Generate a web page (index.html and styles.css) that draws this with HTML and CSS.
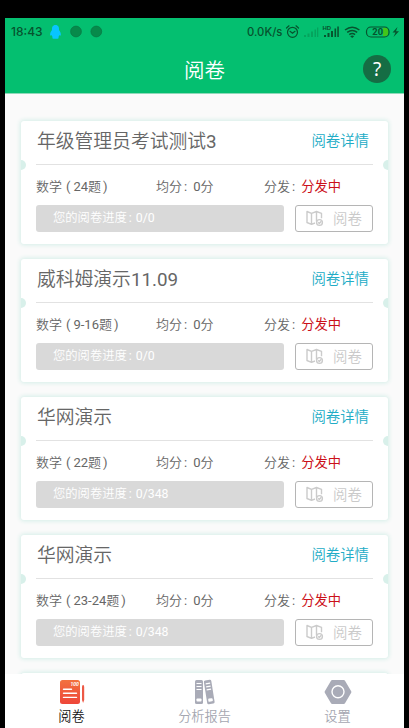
FILE: index.html
```html
<!DOCTYPE html>
<html lang="zh-CN">
<head>
<meta charset="utf-8">
<title>阅卷</title>
<link rel="stylesheet" href="styles.css">
</head>
<body>
<svg width="0" height="0" class="defs">
  <symbol id="map" viewBox="0 0 18 17">
    <g fill="none" stroke="#cbcbcb" stroke-width="1.4" stroke-linejoin="round">
      <path d="M1 1.500 5.500 3.300v11L1 12.500zM5.500 3.300 10.500 1.500v10M5.500 14.300l3.500-1.300M10.500 1.500 15.500 3.300v5"/>
      <circle cx="13.500" cy="12.500" r="2.900"/><path d="m12.200 12.300 1.100 1.100 2-2.100"/>
    </g>
  </symbol>
</svg>
<div class="phone">
  <header class="header">
    <div class="status">
      <span class="time">18:43</span>
      <svg class="notices" width="54" height="16" viewBox="0 0 54 16">
        <path d="M6.500 1C3.600 1 2.700 3.500 3 6 1.800 7.500.8 9.500 1.200 11.500c.8.3 1.300-.5 1.300-.5.3 1 .8 1.600 1.200 2-1.400 1.400.5 2 2.800 1.700 2.300.3 4.200-.3 2.800-1.700.4-.4.9-1 1.200-2 0 0 .5.8 1.300.5.4-2-.6-4-1.800-5.500.3-2.500-.6-5-3.500-5z" fill="#08c5ff"/>
        <g fill="#078a4b" stroke="#087643" stroke-width=".7"><circle cx="27" cy="7.500" r="5.400"/><circle cx="47.300" cy="7.500" r="5.400"/></g>
      </svg>
      <span class="speed">0.0K/s</span>
      <svg class="signals" width="116" height="18" viewBox="0 0 116 18">
        <g fill="none" stroke="#07532e" stroke-width="1.200" stroke-linecap="round">
          <circle cx="8.500" cy="9.300" r="5"/><path d="m6 8.300 2.500 2L11 8.300M2.500 5 5 2.800M14.500 5 12 2.800"/>
        </g>
        <g fill="#05a35d"><path d="M20 12h2v2h-2zM23.500 10.500h2V14h-2zM27 8.500h2V14h-2zM30.500 6.500h1.500V14h-1.500zM33 4.500h1.300V14H33z"/></g>
        <g fill="#07532e"><path d="M40 12h2v2h-2zM43.500 10h2v4h-2zM47 8h2v6h-2zM50.500 5.500h1.600V14h-1.600zM53.300 3.500h1.500V14h-1.500z"/></g>
        <text x="38.500" y="7" class="hd">HD</text>
        <g fill="none" stroke="#07532e" stroke-width="1.500"><path d="M61 7q7.200-5.500 14.400 0M63.200 9.300q5-3.800 10 0M65.300 11.600q2.900-2.200 5.800 0"/></g>
        <path d="m66.200 13.200 2 1.800 2-1.800q-2-1.400-4 0z" fill="#07532e"/>
        <path d="M99 4.800h2q3.500 0 3.500 4.200t-3.500 4.200h-2z" fill="#42c51b"/>
        <rect x="82.500" y="4" width="22.500" height="10" rx="4.500" fill="none" stroke="#07532e" stroke-width="1.200"/>
        <text x="88.300" y="12.400" class="battery">20</text>
        <path d="m113.500 4-5 5.500h3L109.500 14l5.500-5.700h-3z" fill="#07532e"/>
      </svg>
    </div>
    <div class="bar"><h1>阅卷</h1><span class="help">?</span></div>
  </header>

  <main class="list">
    <section class="card">
      <div class="head"><h2>年级管理员考试测试<span class="num">3</span></h2><a>阅卷详情</a></div>
      <div class="info"><span>数学<i class="open">(</i><span class="num">24</span>题<i class="close">)</i></span><span>均分<i class="colon">:</i><span class="num">0</span>分</span><span>分发<i class="colon">:</i><b>分发中</b></span></div>
      <div class="actions"><div class="progress">您的阅卷进度<i class="colon">:</i><span class="num">0/0</span></div><div class="button"><svg width="18" height="17"><use href="#map"/></svg><span>阅卷</span></div></div>
    </section>
    <section class="card">
      <div class="head"><h2>威科姆演示<span class="num">11.09</span></h2><a>阅卷详情</a></div>
      <div class="info"><span>数学<i class="open">(</i><span class="num">9-16</span>题<i class="close">)</i></span><span>均分<i class="colon">:</i><span class="num">0</span>分</span><span>分发<i class="colon">:</i><b>分发中</b></span></div>
      <div class="actions"><div class="progress">您的阅卷进度<i class="colon">:</i><span class="num">0/0</span></div><div class="button"><svg width="18" height="17"><use href="#map"/></svg><span>阅卷</span></div></div>
    </section>
    <section class="card">
      <div class="head"><h2>华网演示</h2><a>阅卷详情</a></div>
      <div class="info"><span>数学<i class="open">(</i><span class="num">22</span>题<i class="close">)</i></span><span>均分<i class="colon">:</i><span class="num">0</span>分</span><span>分发<i class="colon">:</i><b>分发中</b></span></div>
      <div class="actions"><div class="progress">您的阅卷进度<i class="colon">:</i><span class="num">0/348</span></div><div class="button"><svg width="18" height="17"><use href="#map"/></svg><span>阅卷</span></div></div>
    </section>
    <section class="card">
      <div class="head"><h2>华网演示</h2><a>阅卷详情</a></div>
      <div class="info"><span>数学<i class="open">(</i><span class="num">23-24</span>题<i class="close">)</i></span><span>均分<i class="colon">:</i><span class="num">0</span>分</span><span>分发<i class="colon">:</i><b>分发中</b></span></div>
      <div class="actions"><div class="progress">您的阅卷进度<i class="colon">:</i><span class="num">0/348</span></div><div class="button"><svg width="18" height="17"><use href="#map"/></svg><span>阅卷</span></div></div>
    </section>
    <section class="card"></section>
  </main>

  <nav class="tabs">
    <div class="tab active">
      <svg width="28" height="26" viewBox="0 0 28 26">
        <defs><linearGradient id="warm" x2="0" y2="1"><stop stop-color="#f2713f"/><stop offset="1" stop-color="#ee4639"/></linearGradient></defs>
        <rect x="2" y="1" width="20" height="24" rx="2.500" fill="url(#warm)"/>
        <path d="M24 8q0-2 1.100-2t1.100 2v13l-1.100 3L24 21z" fill="#ed5945"/>
        <path d="M5.500 10.200h8M5.500 14.300h13M5.500 18.400h13" stroke="#fff" stroke-width="1.400" stroke-linecap="round"/>
        <text x="12.500" y="7" class="score">100</text>
      </svg>
      <span>阅卷</span>
    </div>
    <div class="tab">
      <svg width="28" height="26" viewBox="0 0 28 26">
        <rect x="4" y="1" width="8" height="24" rx="1.500" fill="#a9abb7"/>
        <path d="M5.500 4.500h5M5.500 7.500h5M5.500 10.500h5" stroke="#fff" stroke-width="1.200"/><rect x="5.500" y="19.500" width="5" height="3" rx=".8" fill="#fff"/>
        <g transform="rotate(-9 18 13)"><rect x="14.500" y="1" width="7.500" height="24" rx="1.500" fill="#a9abb7"/><path d="M16 4.500h4.500M16 7.500h4.500M16 10.500h4.500" stroke="#fff" stroke-width="1.200"/><rect x="16" y="19.500" width="4.500" height="3.200" rx="1" fill="#fff"/></g>
      </svg>
      <span>分析报告</span>
    </div>
    <div class="tab">
      <svg width="28" height="26" viewBox="0 0 28 26">
        <path d="M8.200 1h11.600q.8 0 1.200.7l6.200 10.600q.4.700 0 1.400L21 24.300q-.4.700-1.200.7H8.200q-.8 0-1.200-.7L.8 13.700q-.4-.7 0-1.400L7 1.700Q7.400 1 8.200 1z" fill="#a9abb7"/>
        <circle cx="14" cy="12.700" r="6" fill="none" stroke="#fff" stroke-width="1.400"/>
      </svg>
      <span>设置</span>
    </div>
  </nav>
</div>
</body>
</html>
```
FILE: styles.css
```css
* { box-sizing: border-box; }
body {
  margin: 0;
  background: #000;
  font-family: Roboto, "Noto Sans CJK SC", sans-serif;
  font-weight: 350;
  overflow: hidden;
}
.defs { position: absolute; }
i { font-style: normal; font-weight: 400; }
.num { font-weight: 400; }
h1, h2 { margin: 0; font-weight: 350; }
.phone {
  width: 399px;
  height: 710px;
  margin: 18px 0 0 5px;
  background: #fafafa;
  display: flex;
  flex-direction: column;
  overflow: hidden;
}
.header {
  height: 76px;
  flex: none;
  background: #04bf70;
  border-bottom: 1px solid #8fd9b9;
}
.status {
  height: 27px;
  display: flex;
  align-items: center;
  padding-left: 6px;
  color: #07532e;
}
.time { width: 38px; font-family: Inter, sans-serif; font-size: 12px; font-weight: 500; }
.speed { margin-left: 144px; width: 37px; font-family: Inter, sans-serif; font-size: 11.300px; font-weight: 500; white-space: nowrap; }
.hd { font: 700 6px "Liberation Sans", sans-serif; fill: #07532e; }
.battery { font: 700 9.500px Roboto, sans-serif; fill: #07532e; }
.bar {
  height: 48px;
  display: grid;
  grid-template-columns: 1fr auto 1fr;
  align-items: center;
}
.bar h1 { grid-column: 2; padding-top: 3px; font-size: 20.500px; line-height: 30px; color: #fff; }
.help {
  justify-self: end;
  margin-right: 13px;
  width: 28px;
  height: 28px;
  border-radius: 50%;
  background: #156d44;
  color: #fff;
  font-family: "Noto Sans", sans-serif;
  font-size: 19px;
  font-weight: 400;
  line-height: 29px;
  text-align: center;
}
.list { flex: 1; min-height: 0; overflow: hidden; padding: 27px 16px 0; }
.card {
  position: relative;
  height: 123px;
  margin-bottom: 15px;
  padding: 0 15px;
  background: #fff;
  border-radius: 3px;
  box-shadow: 0 0 4px 1px #d4eee8;
}
.card::before, .card::after {
  content: "";
  position: absolute;
  top: 39px;
  width: 5px;
  height: 10px;
  background: #d8f0ea;
}
.card::before { left: 0; border-radius: 0 5px 5px 0; }
.card::after { right: 0; border-radius: 5px 0 0 5px; }
.head {
  height: 44px;
  border-bottom: 1px solid #e2e2e2;
  display: flex;
  justify-content: space-between;
  align-items: center;
  padding: 0 4px 5px 1px;
}
.head h2 { padding-top: 3px; font-size: 18.800px; line-height: 28px; color: #666; }
.head a { padding-bottom: 2px; font-size: 14.400px; color: #22acc6; }
.info {
  height: 40px;
  display: grid;
  grid-template-columns: 120px 108px 1fr;
  align-items: center;
  font-size: 13px;
  color: #666;
}
.info b { font-weight: 400; color: #cb1019; font-size: 13.300px; }
.open { margin: 0 3px 0 4px; }
.close { margin-left: 2px; }
.colon { margin: 0 6px 0 2px; }
.actions { display: flex; gap: 11px; }
.progress {
  width: 248px;
  height: 27px;
  padding-left: 17px;
  border-radius: 3px;
  background: #d9d9d9;
  color: #fff;
  font-size: 12.300px;
  line-height: 27px;
}
.progress .colon { margin: 0 4px 0 2px; }
.button {
  flex: 1;
  height: 27px;
  border: 1px solid #b5b5b5;
  border-radius: 3px;
  display: flex;
  align-items: center;
  gap: 9px;
  padding-left: 10px;
  font-size: 14.400px;
  color: #cacaca;
}
.button span { padding-bottom: 2px; }
.tabs { height: 54px; flex: none; background: #fff; display: flex; }
.tab {
  flex: 1;
  display: flex;
  flex-direction: column;
  align-items: center;
  padding-top: 5px;
  color: #a5a7b1;
  font-size: 13.200px;
}
.tab svg { flex: none; }
.tab span { line-height: 20px; margin-top: 2px; }
.tab.active { color: #111; }
.score { font: italic 700 5px Roboto, sans-serif; fill: #fff; }
```
